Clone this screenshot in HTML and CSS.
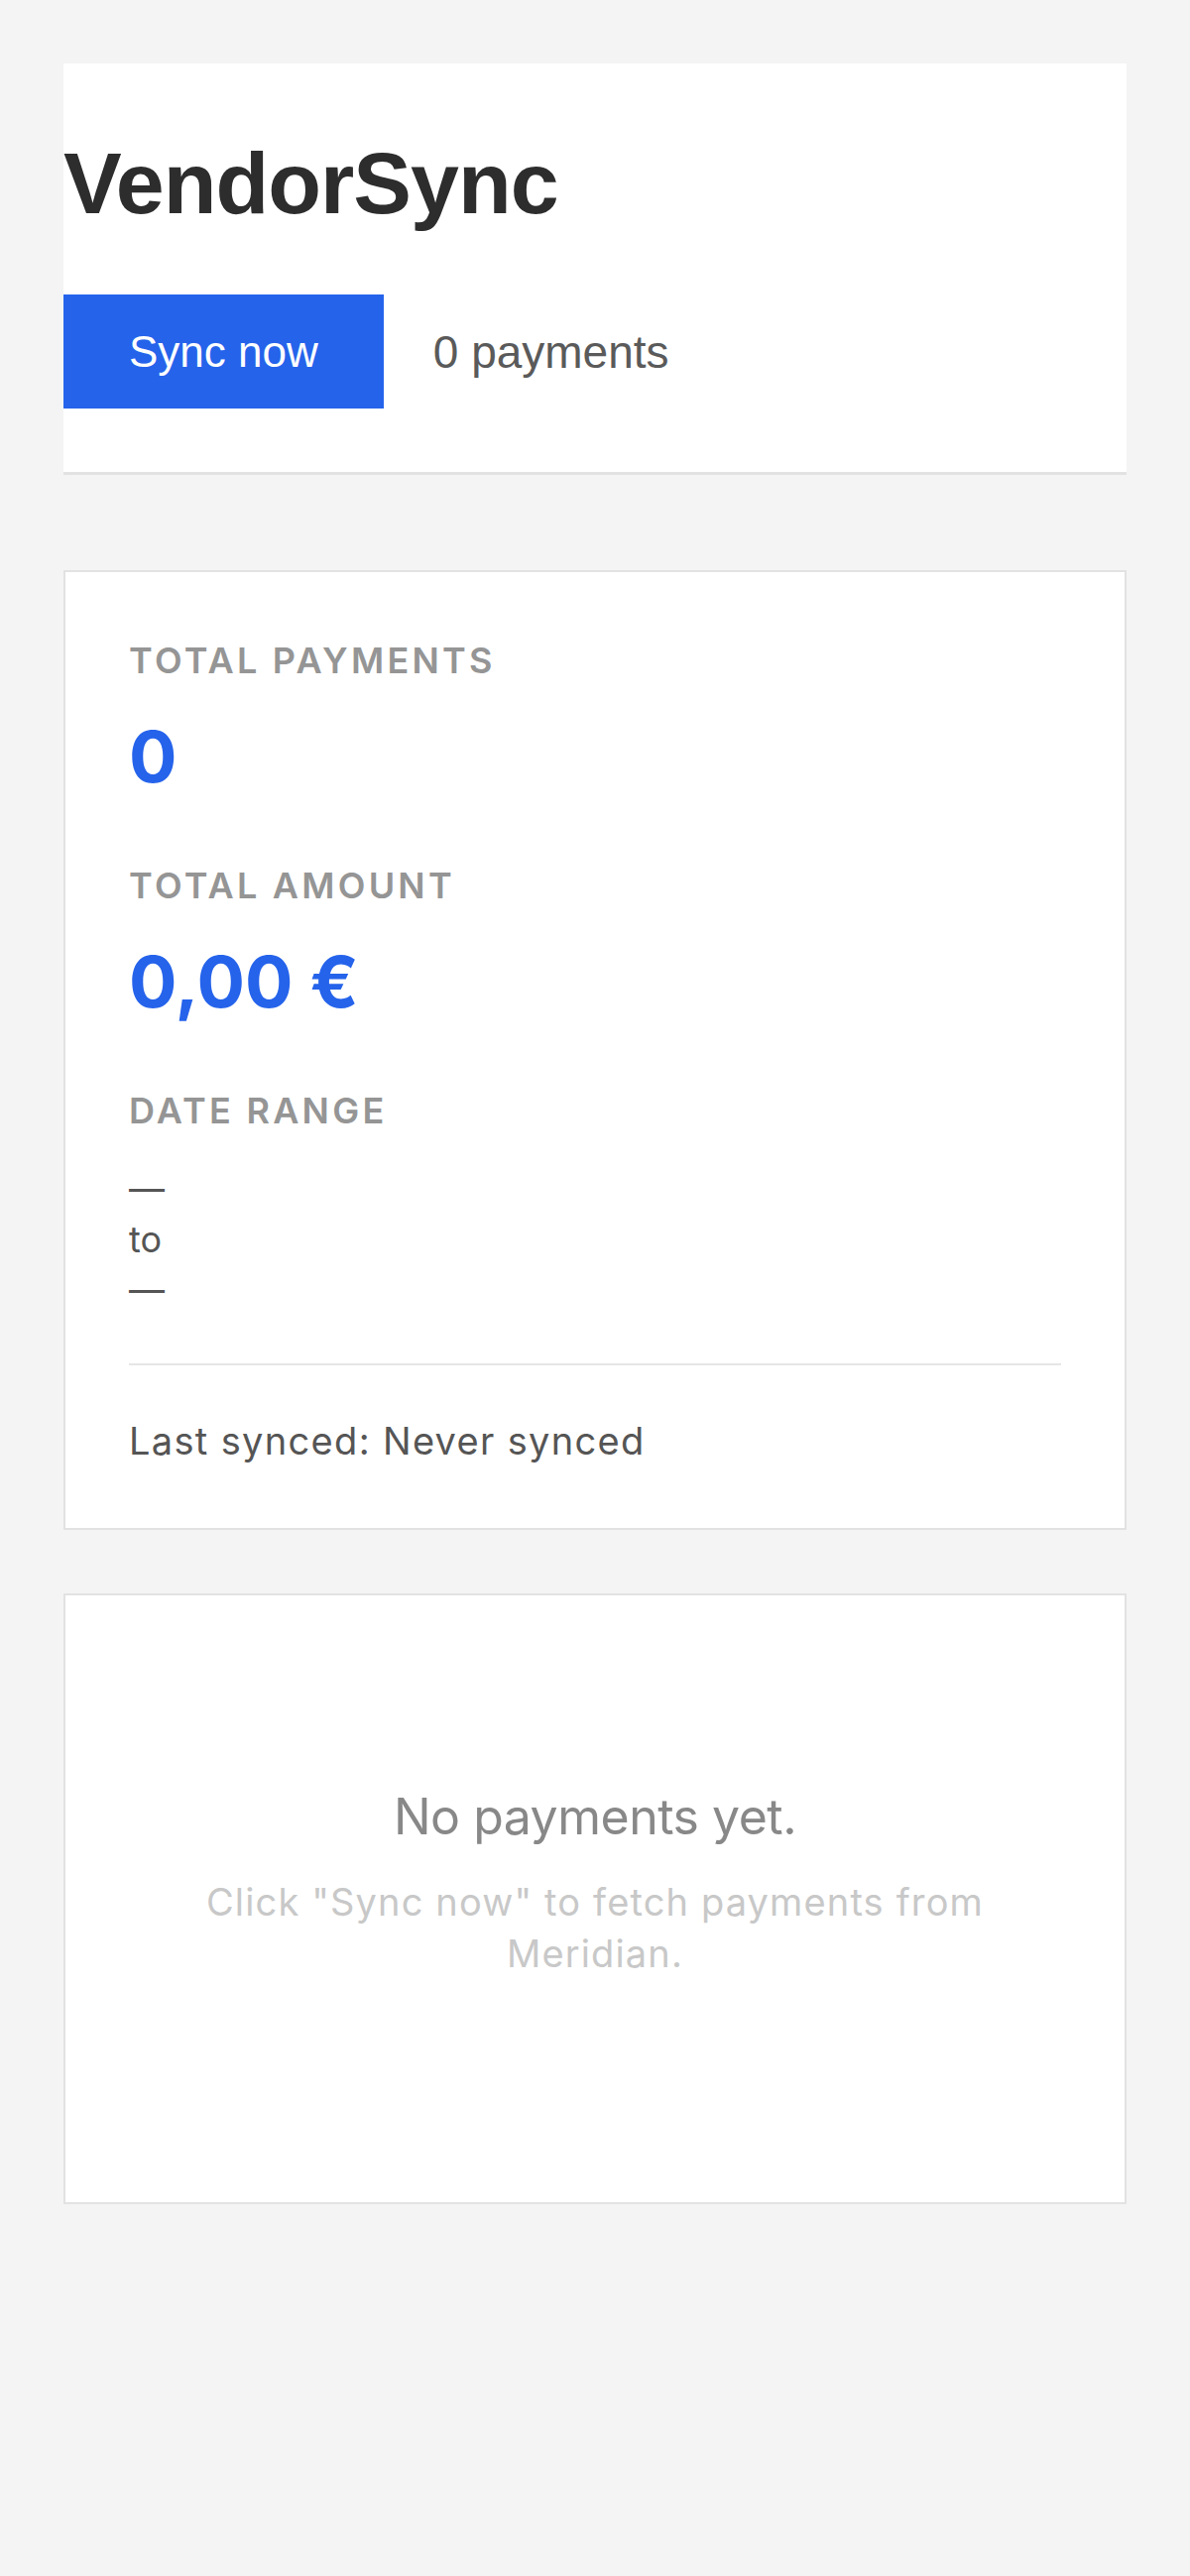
FILE: index.html
```html
<!DOCTYPE html>
<html lang="en">
<head>
    <meta charset="UTF-8">
    <meta name="viewport" content="width=device-width, initial-scale=1.0">
    <title>VendorSync</title>
    <link rel="stylesheet" href="styles.css">
</head>
<body>
    <header class="app-header">
        <h1>VendorSync</h1>
        <div class="toolbar">
            <button class="sync-btn" type="button">Sync now</button>
            <span class="payment-count">0 payments</span>
        </div>
    </header>

    <section class="card summary">
        <div class="stat">
            <div class="stat-label">Total payments</div>
            <div class="stat-value">0</div>
        </div>

        <div class="stat">
            <div class="stat-label">Total amount</div>
            <div class="stat-value">0,00 €</div>
        </div>

        <div class="stat">
            <div class="stat-label">Date range</div>
            <div class="date-range">
                <div>—</div>
                <div>to</div>
                <div>—</div>
            </div>
        </div>

        <div class="last-synced">Last synced: Never synced</div>
    </section>

    <section class="card empty-state">
        <p class="empty-title">No payments yet.</p>
        <p class="empty-hint">Click "Sync now" to fetch payments from Meridian.</p>
    </section>
</body>
</html>
```

FILE: styles.css
```css
html {
    background: #f4f4f4;
}

body {
    margin: 0;
    padding: 64px;
    font-family: Inter, "Noto Sans", sans-serif;
    color: #555;
    background: #f4f4f4;
}

/* Header */

.app-header {
    background: white;
    padding: 64px 0;
    border-bottom: 3px solid #e2e2e2;
    margin-bottom: 96px;
    font-family: "Liberation Sans", Arial, sans-serif;
}

.app-header h1 {
    margin: 0 0 55px;
    font-size: 88px;
    font-weight: 700;
    line-height: 1.3;
    letter-spacing: -1px;
    color: #2d2d2d;
}

.toolbar {
    display: flex;
    align-items: center;
    gap: 50px;
}

.sync-btn {
    background: #2563eb;
    color: white;
    border: none;
    border-radius: 0;
    padding: 32px 66px;
    font-family: inherit;
    font-size: 44px;
    line-height: 51px;
    cursor: pointer;
}

.payment-count {
    font-size: 46px;
    color: #5a5a5a;
}

/* Cards */

.card {
    background: white;
    border: 2px solid #e2e2e2;
}

.summary {
    padding: 64px 64px 62px;
    margin-bottom: 64px;
}

.stat + .stat {
    margin-top: 62px;
}

.stat-label {
    font-size: 36px;
    font-weight: 600;
    line-height: 51px;
    letter-spacing: 0.09em;
    text-transform: uppercase;
    color: #959595;
    margin-bottom: 28px;
}

.stat-value {
    font-size: 72px;
    font-weight: 700;
    line-height: 86px;
    color: #2563eb;
}

.date-range {
    font-size: 36px;
    line-height: 51px;
    color: #555;
}

.last-synced {
    margin-top: 48px;
    padding-top: 51px;
    border-top: 2px solid #e6e6e6;
    font-size: 38px;
    line-height: 51px;
    letter-spacing: 0.035em;
    color: #555;
}

/* Empty state */

.empty-state {
    padding: 192px 64px 225px;
    text-align: center;
}

.empty-title {
    margin: 0 0 29px;
    font-size: 50px;
    line-height: 62px;
    letter-spacing: -0.01em;
    color: #888;
}

.empty-hint {
    max-width: 880px;
    margin: 0 auto;
    font-size: 38px;
    line-height: 52px;
    letter-spacing: 0.03em;
    color: #c8c8c8;
}
```
